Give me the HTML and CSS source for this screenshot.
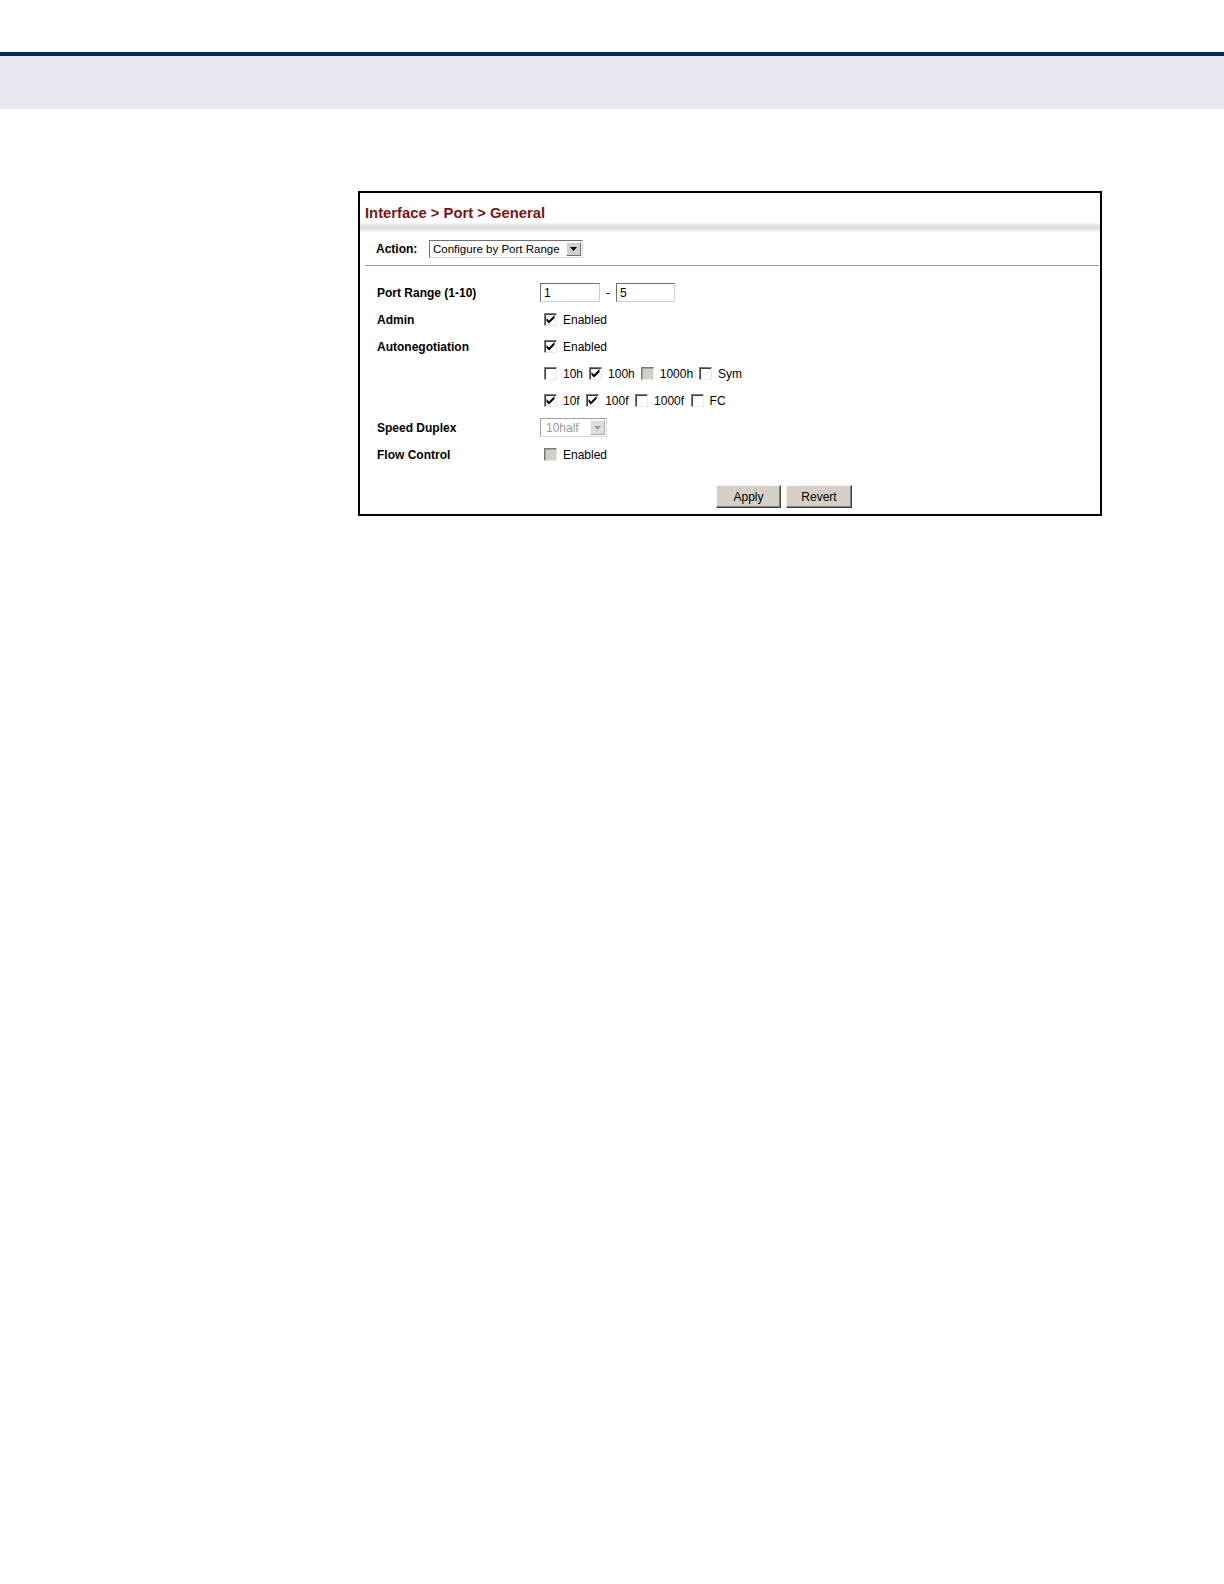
FILE: index.html
```html
<!DOCTYPE html>
<html>
<head>
<meta charset="utf-8">
<link rel="stylesheet" href="styles.css">
</head>
<body>
<div class="topline"></div>
<div class="band"></div>
<div class="panel">
  <div class="title">Interface &gt; Port &gt; General</div>
  <div class="grad"></div>
  <div class="action">
    <span class="action-label">Action:</span>
    <span class="select">
      <span class="select-text">Configure by Port Range</span>
      <span class="select-btn"><svg width="7" height="4" viewBox="0 0 7 4"><path d="M0 0h7L3.5 4z" fill="#000"/></svg></span>
    </span>
  </div>
  <div class="form">
    <div class="label">Port Range (1-10)</div>
    <div class="value">
      <span class="input">1</span><span class="dash">-</span><span class="input second">5</span>
    </div>
    <div class="label">Admin</div>
    <div class="value"><span class="cb"><svg class="chk" width="11" height="11" viewBox="0 0 11 11"><path d="M1.5 4v3l2.5 2.5 5.5-5.5v-3l-5.5 5.5z" fill="#000"/></svg></span><span class="txt">Enabled</span></div>
    <div class="label">Autonegotiation</div>
    <div class="value"><span class="cb"><svg class="chk" width="11" height="11" viewBox="0 0 11 11"><path d="M1.5 4v3l2.5 2.5 5.5-5.5v-3l-5.5 5.5z" fill="#000"/></svg></span><span class="txt">Enabled</span></div>
    <div class="label"></div>
    <div class="value opts">
      <span class="cb"></span><span class="txt">10h</span>
      <span class="cb"><svg class="chk" width="11" height="11" viewBox="0 0 11 11"><path d="M1.5 4v3l2.5 2.5 5.5-5.5v-3l-5.5 5.5z" fill="#000"/></svg></span><span class="txt">100h</span>
      <span class="cb dis"></span><span class="txt">1000h</span>
      <span class="cb"></span><span class="txt">Sym</span>
    </div>
    <div class="label"></div>
    <div class="value opts2">
      <span class="cb"><svg class="chk" width="11" height="11" viewBox="0 0 11 11"><path d="M1.5 4v3l2.5 2.5 5.5-5.5v-3l-5.5 5.5z" fill="#000"/></svg></span><span class="txt">10f</span>
      <span class="cb"><svg class="chk" width="11" height="11" viewBox="0 0 11 11"><path d="M1.5 4v3l2.5 2.5 5.5-5.5v-3l-5.5 5.5z" fill="#000"/></svg></span><span class="txt">100f</span>
      <span class="cb"></span><span class="txt">1000f</span>
      <span class="cb"></span><span class="txt">FC</span>
    </div>
    <div class="label">Speed Duplex</div>
    <div class="value">
      <span class="select disabled">
        <span class="select-text">10half</span>
        <span class="select-btn"><svg width="7" height="4" viewBox="0 0 7 4"><path d="M0 0h7L3.5 4z" fill="#a0a0a0"/></svg></span>
      </span>
    </div>
    <div class="label">Flow Control</div>
    <div class="value"><span class="cb dis"></span><span class="txt">Enabled</span></div>
  </div>
  <div class="buttons">
    <span class="btn apply">Apply</span><span class="btn revert">Revert</span>
  </div>
</div>
</body>
</html>
```
FILE: styles.css
```css
html, body {
  margin: 0;
  padding: 0;
  background: #fff;
  font-family: "Liberation Sans", Arial, sans-serif;
  color: #000;
}
.topline {
  margin-top: 52px;
  height: 4px;
  background: #0b2363;
}
.band {
  height: 53px;
  background: #e5e8ef;
}
.panel {
  margin: 82px 0 0 358px;
  width: 744px;
  height: 325px;
  box-sizing: border-box;
  border: 2px solid #000;
  display: flex;
  flex-direction: column;
}
.title {
  height: 30px;
  display: flex;
  align-items: center;
  padding: 9px 0 0 5px;
  box-sizing: border-box;
  font-size: 14.8px;
  font-weight: bold;
  color: #7b1416;
}
.grad {
  height: 9px;
  background: linear-gradient(#f6f6f6, #dcdcdc 45%, #e4e4e4 70%, #fafafa);
}
.action {
  height: 34px;
  margin: 0 1px 0 5px;
  border-bottom: 1px solid #9a9a9a;
  display: flex;
  align-items: center;
  padding: 1px 0 0 11px;
  box-sizing: border-box;
}
.action-label {
  font-size: 12px;
  font-weight: bold;
  width: 53px;
}
.select {
  display: inline-flex;
  align-items: stretch;
  height: 18px;
  box-sizing: border-box;
  border: 1px solid;
  border-color: #707070 #d8d8d8 #d8d8d8 #707070;
  background: #fff;
  font-size: 11.5px;
  white-space: nowrap;
}
.select-text {
  padding: 0 2px 0 3px;
  display: flex;
  align-items: center;
  overflow: hidden;
}
.select-btn {
  width: 15px;
  flex: none;
  margin: 1px 1px 1px 0;
  background: #d4d0c8;
  border: 1px solid;
  border-color: #fff #707070 #707070 #fff;
  box-sizing: border-box;
  display: flex;
  align-items: center;
  justify-content: center;
}
.action .select { width: 154px; }
.action .select .select-text { flex: 1; }
.select.disabled {
  width: 67px;
  height: 19px;
  border-color: #a0a0a0 #d8d8d8 #d8d8d8 #a0a0a0;
  color: #9a9a9a;
  font-size: 12px;
}
.select.disabled .select-text { flex: 1; padding-left: 5px; }
.select.disabled .select-btn {
  border-color: #f4f4f4 #b0b0b0 #b0b0b0 #f4f4f4;
  background: #ddd;
}
.form {
  display: grid;
  grid-template-columns: 163px 1fr;
  grid-auto-rows: 27px;
  padding: 13px 0 0 17px;
}
.label {
  font-size: 12px;
  font-weight: bold;
  display: flex;
  align-items: center;
}
.value {
  display: flex;
  align-items: center;
  font-size: 12px;
}
.input {
  width: 60px;
  height: 19px;
  box-sizing: border-box;
  border: 1px solid;
  border-color: #6e6e6e #cfcfcf #cfcfcf #6e6e6e;
  padding-left: 3px;
  font-size: 12px;
  display: flex;
  align-items: center;
}
.input.second { width: 59px; }
.dash {
  width: 16px;
  text-align: center;
  font-size: 12px;
}
.cb {
  width: 13px;
  height: 13px;
  flex: none;
  box-sizing: border-box;
  border: 1px solid;
  border-color: #7a7a7a #e8e8e8 #e8e8e8 #7a7a7a;
  background: #fff;
  margin-left: 4px;
  box-shadow: inset 1px 1px 0 #404040;
  display: flex;
}
.chk {
  display: block;
  margin: 0;
}
.cb.dis {
  background: #d4d0c8;
  box-shadow: inset 1px 1px 0 #a0a0a0;
}
.txt {
  margin-left: 6px;
}
.opts .txt { margin-right: 2px; }
.opts2 .txt { margin-right: 2.5px; }
.buttons {
  display: flex;
  margin: 17px 0 0 356px;
  gap: 5px;
}
.btn {
  height: 23px;
  box-sizing: border-box;
  background: #d4d0c8;
  border: 1px solid;
  border-color: #f4f4f4 #404040 #404040 #f4f4f4;
  box-shadow: inset -1px -1px 0 #808080;
  font-size: 12px;
  display: flex;
  align-items: center;
  justify-content: center;
}
.apply { width: 65px; }
.revert { width: 66px; }
```
